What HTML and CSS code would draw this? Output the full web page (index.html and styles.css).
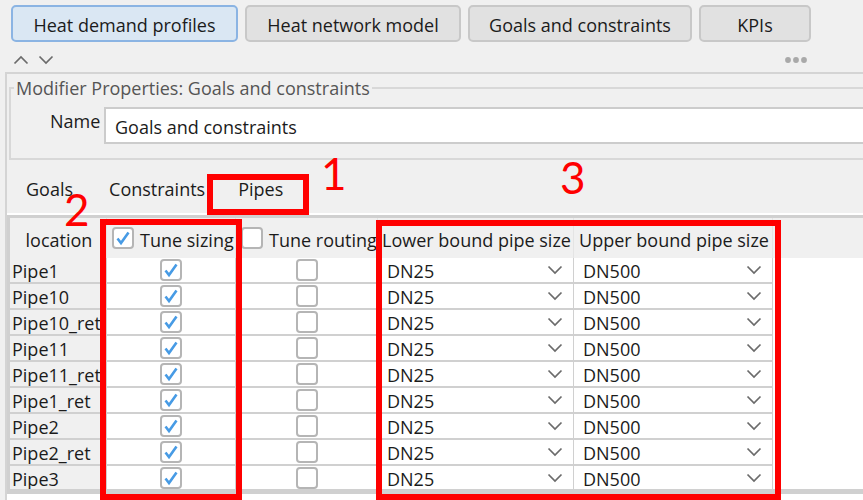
FILE: index.html
```
<!DOCTYPE html>
<html lang="en">
<head>
<meta charset="utf-8">
<title>Goals and constraints</title>
<link rel="stylesheet" href="styles.css">
</head>
<body>
<nav class="steps">
<button class="step step-active step-a" type="button">Heat demand profiles</button>
<button class="step step-b" type="button">Heat network model</button>
<button class="step step-c" type="button">Goals and constraints</button>
<button class="step step-d" type="button">KPIs</button>
</nav>
<div class="toolbar">
<button class="icon" type="button" aria-label="Up"><svg width="16" height="10" viewBox="0 0 16 10"><path d="M1.500 8.500 8 2l6.500 6.500"/></svg></button>
<button class="icon" type="button" aria-label="Down"><svg width="16" height="10" viewBox="0 0 16 10"><path d="M1.500 1.500 8 8l6.500-6.500"/></svg></button>
<button class="icon more" type="button" aria-label="More"><svg width="24" height="8" viewBox="0 0 24 8"><circle cx="4" cy="4" r="2.900"/><circle cx="12" cy="4" r="2.900"/><circle cx="20" cy="4" r="2.900"/></svg></button>
</div>
<main class="panel">
<fieldset class="props">
<legend>Modifier Properties: Goals and constraints</legend>
<label for="name">Name</label>
<input id="name" class="name" type="text" value="Goals and constraints">
</fieldset>
<div class="tabs" role="tablist">
<button class="tab" role="tab" type="button">Goals</button>
<button class="tab" role="tab" type="button">Constraints</button>
<button class="tab tab-pipes" role="tab" type="button" aria-selected="true">Pipes<span class="mark mark-tab"></span></button>
</div>
<div class="pane">
<div class="scroll">
<table class="grid">
<colgroup><col class="c-loc"><col class="c-size"><col class="c-route"><col class="c-low"><col class="c-up"><col></colgroup>
<thead><tr>
<th>location</th>
<th><label class="head-check"><input type="checkbox" checked>Tune sizing</label></th>
<th><label class="head-check"><input type="checkbox">Tune routing</label></th>
<th>Lower bound pipe size</th>
<th>Upper bound pipe size</th>
<td class="rest"></td>
</tr></thead>
<tbody id="rows"></tbody>
</table>
</div>
<span class="mark mark-sizing"></span>
<span class="mark mark-bounds"></span>
<span class="num num-one">1</span>
<span class="num num-two">2</span>
<span class="num num-three">3</span>
</div>
</main>
<script src="rows.js"></script>
</body>
</html>
```
FILE: rows.js
```
const pipes = ["Pipe1", "Pipe10", "Pipe10_ret", "Pipe11", "Pipe11_ret", "Pipe1_ret", "Pipe2", "Pipe2_ret", "Pipe3"];
const picker = (label, value) => `<td><div class="pick"><select aria-label="${label}"><option>${value}</option></select><svg width="16" height="10" viewBox="0 0 16 10"><path d="M1.500 1.500 8 8l6.500-6.500"/></svg></div></td>`;
document.getElementById("rows").innerHTML = pipes.map((pipe) => `<tr>
<th scope="row">${pipe}</th>
<td><input class="tick" type="checkbox" aria-label="${pipe} tune sizing" checked></td>
<td><input class="tick" type="checkbox" aria-label="${pipe} tune routing"></td>
${picker(`${pipe} lower bound`, "DN25")}
${picker(`${pipe} upper bound`, "DN500")}
</tr>`).join("");
```
FILE: styles.css
```
* { box-sizing: border-box; }
body {
  display: flex;
  flex-direction: column;
  min-height: 100vh;
  margin: 0;
  background: #f0f0f0;
  color: #1b1b1b;
  font: 18px/24px "Segoe UI", "Open Sans", "Noto Sans", sans-serif;
}
button, input, select { font: inherit; color: inherit; }
svg { display: block; fill: none; stroke: #6b6b6b; stroke-width: 1.700; }

.steps { display: flex; gap: 7px; padding: 5px 11px 0; }
.step {
  height: 37px;
  padding: 2px 0 0;
  border: 2px solid #c8c8c8;
  border-radius: 5px;
  background: #e1e1e1;
  white-space: nowrap;
}
.step-active { background: #dae7f3; border-color: #8bb4e3; }
.step-a { width: 227px; }
.step-b { width: 216px; }
.step-c { width: 224px; }
.step-d { width: 112px; }

.toolbar { display: flex; align-items: center; gap: 9px; height: 30px; padding: 6px 55px 0 13px; }
.icon { padding: 0; border: 0; background: none; }
.more { margin-left: auto; }
.more svg { fill: #a9a9a9; stroke: none; }

.panel {
  display: flex;
  flex: 1;
  flex-direction: column;
  margin-left: 5px;
  border: 2px solid #d4d4d4;
  border-width: 2px 0 0 2px;
}
.panel::after { content: ""; flex: 1; background: #fff; }
.props {
  display: flex;
  align-items: flex-start;
  height: 84px;
  margin: 2px 0 0 2px;
  padding: 7px 0 0 39px;
  border: 2px solid #d8d8d8;
  border-right: 0;
  min-width: 0;
}
.props legend { margin-left: -36px; padding: 0 2px; color: #555; }
.props label { width: 54px; line-height: 28px; }
.name {
  flex: 1;
  min-width: 0;
  height: 37px;
  padding: 2px 9px 0;
  border: 2px solid #ccc;
  border-right: 0;
  background: #fff;
}

.tabs { display: flex; height: 55px; border-bottom: 2px solid #fff; }
.tab { position: relative; padding: 4px 19px 0; border: 0; background: none; }
.tab:nth-child(2) { padding: 4px 2px 0 17px; }
.tab-pipes { width: 102px; padding-right: 14px; }

.pane { position: relative; border: solid #d0d0d0; border-width: 3px 0 5px 3px; background: #fff; }
.scroll { height: 271px; overflow: hidden; }
.grid { width: 100%; border-collapse: separate; border-spacing: 0; table-layout: fixed; }
.c-loc { width: 97px; }
.c-size { width: 129px; }
.c-route { width: 142px; }
.c-low { width: 196px; }
.c-up { width: 199px; }
.grid th, .grid td { padding: 0; font-weight: 400; white-space: nowrap; }
.grid thead th { height: 40px; padding: 4px 0 0 2px; background: #f0f0f0; border-right: 1px solid #e4e4e4; }
.grid thead .rest { border: 0; background: #f0f0f0; }
.grid tbody th { padding: 2px 0 0 2px; text-align: left; background: #f0f0f0; }
.grid tbody th, .grid td { height: 26px; border: 2px solid #d0d0d0; border-width: 0 1px 2px 0; line-height: 22px; }
.head-check { display: flex; align-items: center; gap: 6px; padding-left: 3px; }
.head-check input { transform: translateY(-2px); }
input[type="checkbox"] {
  appearance: none;
  flex: none;
  width: 22px;
  height: 22px;
  margin: 0;
  border: 2px solid #b5b5b5;
  border-radius: 4px;
  background: #fff;
}
input[type="checkbox"].tick { display: block; margin: 0 auto; }
input[type="checkbox"]:checked {
  background: #fff url("data:image/svg+xml,%3Csvg xmlns='http://www.w3.org/2000/svg' viewBox='0 0 18 18'%3E%3Cpath d='M3.500 9.500 7 14 14.500 3.500' fill='none' stroke='%23479be5' stroke-width='2.600'/%3E%3C/svg%3E");
}
.pick { display: flex; align-items: center; padding: 0 10px 0 9px; }
.pick select { flex: 1; height: 24px; padding: 2px 0 0; border: 0; background: none; appearance: none; }

.mark { position: absolute; border: 6px solid #f00; pointer-events: none; }
.mark-tab { left: 0; top: 14px; width: 102px; height: 41px; }
.mark-sizing { left: 90px; top: 1px; width: 142px; height: 281px; }
.mark-bounds { left: 366px; top: 2px; width: 405px; height: 280px; }
.num { position: absolute; color: #f00; font: 44px/44px Lato, sans-serif; pointer-events: none; }
.num-one { left: 311px; top: -67px; }
.num-two { left: 54px; top: -31px; }
.num-three { left: 550px; top: -63px; }
```
